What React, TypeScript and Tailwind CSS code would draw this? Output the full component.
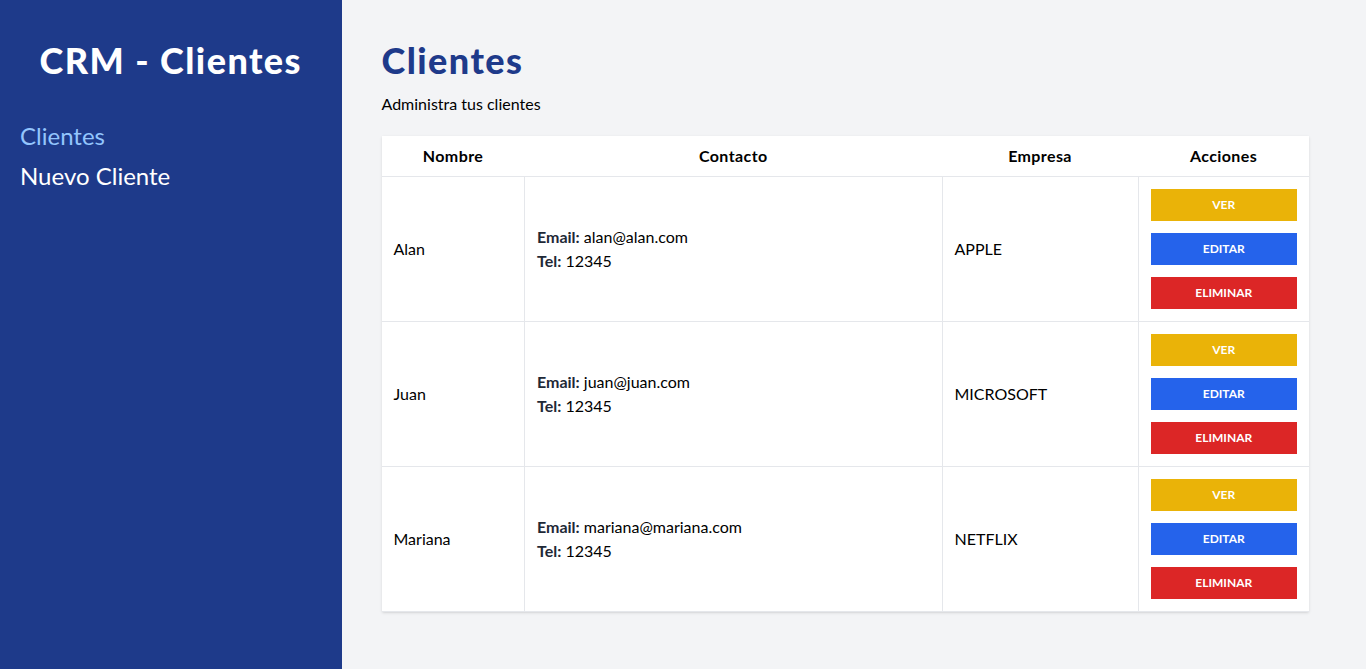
const clientes = [
  { id: 1, nombre: "Alan", email: "alan@alan.com", telefono: "12345", empresa: "APPLE" },
  { id: 2, nombre: "Juan", email: "juan@juan.com", telefono: "12345", empresa: "MICROSOFT" },
  { id: 3, nombre: "Mariana", email: "mariana@mariana.com", telefono: "12345", empresa: "NETFLIX" },
];

type Cliente = (typeof clientes)[number];

const FilaCliente = ({ cliente }: { cliente: Cliente }) => {
  return (
    <tr className="border-b border-[#e5e7eb]">
      <td className="p-3 text-black">{cliente.nombre}</td>
      <td className="p-3 border-l border-[#e5e7eb]">
        <p><span className="text-[#1f2937] font-bold">Email:</span> {cliente.email}</p>
        <p><span className="text-[#1f2937] font-bold">Tel:</span> {cliente.telefono}</p>
      </td>
      <td className="p-3 border-l border-[#e5e7eb]">{cliente.empresa}</td>
      <td className="p-3 border-l border-[#e5e7eb] space-y-3">
        <button type="button" className="block w-full bg-[#eab308] text-white py-2 uppercase font-bold text-xs">Ver</button>
        <button type="button" className="block w-full bg-[#2563eb] text-white py-2 uppercase font-bold text-xs">Editar</button>
        <button type="button" className="block w-full bg-[#dc2626] text-white py-2 uppercase font-bold text-xs">Eliminar</button>
      </td>
    </tr>
  );
};

export default function App() {
  return (
    <div className="flex h-screen font-['Lato',sans-serif]">
      <aside className="w-1/4 bg-[#1e3a8a] px-5 py-10">
        <h2 className="text-4xl font-black tracking-[0.04em] text-center text-white">CRM - Clientes</h2>
        <nav className="mt-10">
          <a href="#" className="block text-2xl text-[#93c5fd]">Clientes</a>
          <a href="#" className="block text-2xl text-white mt-2">Nuevo Cliente</a>
        </nav>
      </aside>

      <main className="w-3/4 py-10 pl-10 pr-[57px] h-screen overflow-scroll bg-[#f3f4f6]">
        <h1 className="font-black text-4xl tracking-[0.04em] text-[#1e3a8a]">Clientes</h1>
        <p className="mt-3">Administra tus clientes</p>

        <table className="w-full bg-white shadow mt-5 table-auto">
          <thead className="text-black">
            <tr className="border-b border-[#e5e7eb]">
              <th className="p-2 w-[143px] font-bold tracking-wide">Nombre</th>
              <th className="p-2 font-bold tracking-wide">Contacto</th>
              <th className="p-2 w-[196px] font-bold tracking-wide">Empresa</th>
              <th className="p-2 w-[171px] font-bold tracking-wide">Acciones</th>
            </tr>
          </thead>
          <tbody>
            {clientes.map(cliente => (
              <FilaCliente key={cliente.id} cliente={cliente} />
            ))}
          </tbody>
        </table>
      </main>
    </div>
  );
}
